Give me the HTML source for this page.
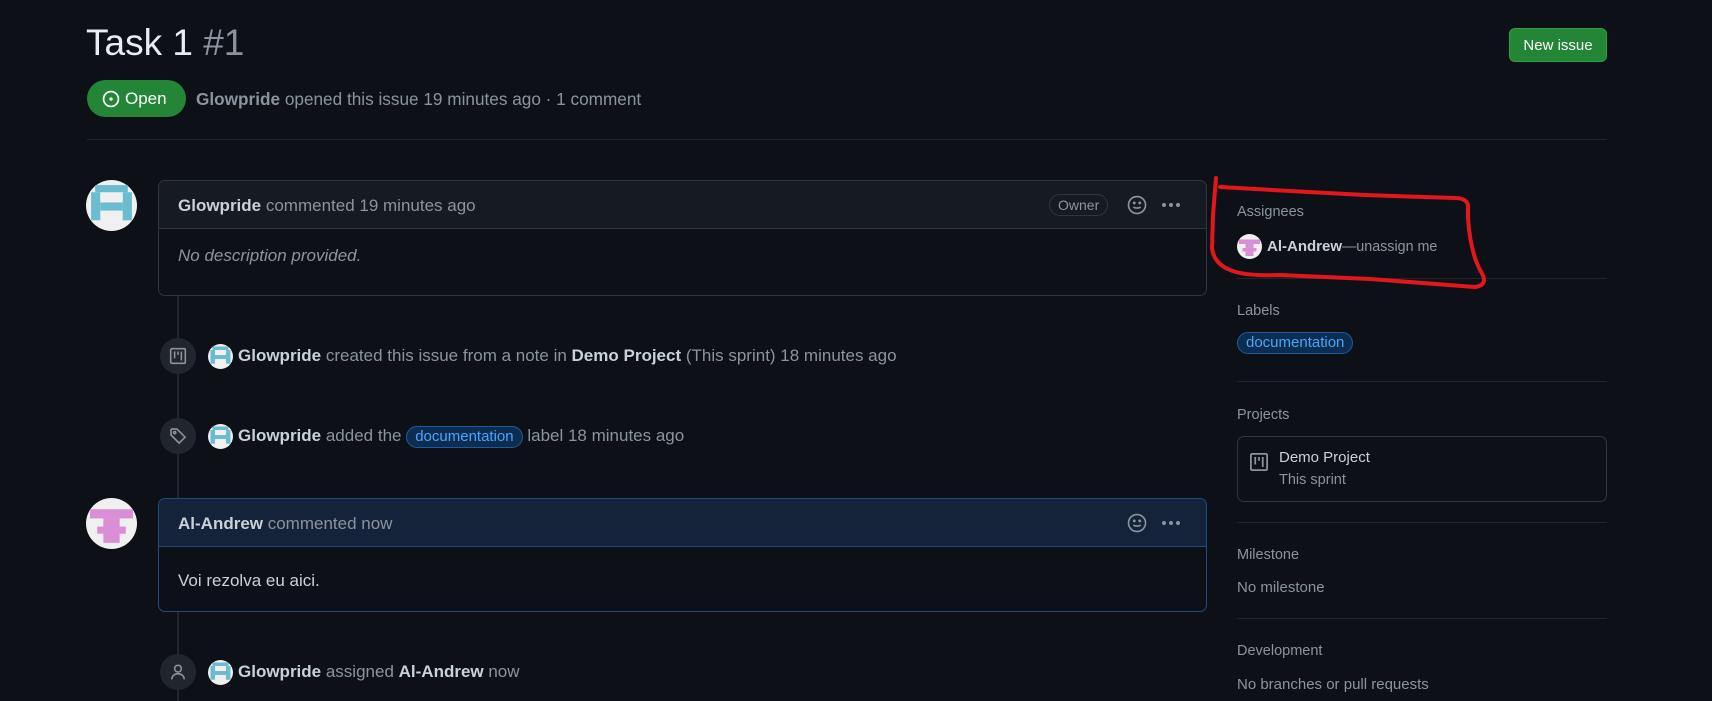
<!DOCTYPE html>
<html><head><meta charset="utf-8"><style>
*{box-sizing:border-box;margin:0;padding:0}
body{width:1712px;height:701px;overflow:hidden;background:#0d1117;font-family:"Liberation Sans",Arial,sans-serif;color:#c9d1d9;font-size:17px;position:relative}
.a{position:absolute;white-space:nowrap}
.m{color:#8b949e}
b{color:#c9d1d9;font-weight:bold}
.hr{position:absolute;height:1px;background:#21262d}
.lbl{display:inline-block;border:1px solid #1f5aa0;background:#0c2d4f;color:#4aa3ff;border-radius:12px;padding:1px 8px;font-size:15px;line-height:18px}
.box{position:absolute;border:1px solid #30363d;border-radius:7px;overflow:hidden;background:#0d1117}
.hd{position:absolute;left:0;right:0;top:0;background:#161b22;border-bottom:1px solid #30363d}
.ev{position:absolute;left:160px;width:36px;height:36px;border-radius:50%;background:#21262d;display:flex;align-items:center;justify-content:center}
.line{position:absolute;left:177px;width:2px;background:#21262d}
.sh{font-size:14.5px;color:#8b949e}
.dots{position:absolute;left:1003px;top:22px;display:flex;gap:3px}
.dots i{width:4px;height:4px;border-radius:50%;background:#8b949e}
</style></head><body>
<svg width="0" height="0" style="position:absolute"><defs>
<g id="gp"><circle cx="50" cy="50" r="50" fill="#f0f0f0"/><rect x="18" y="10" width="64" height="14" fill="#6bbcd1"/><rect x="10" y="24" width="18" height="55" fill="#6bbcd1"/><rect x="72" y="24" width="18" height="55" fill="#6bbcd1"/><rect x="28" y="44" width="44" height="16" fill="#6bbcd1"/><rect x="28" y="30" width="44" height="8" fill="#f0f0f0"/></g>
<g id="aa"><circle cx="50" cy="50" r="50" fill="#f0f0f0"/><rect x="8" y="22" width="84" height="18" fill="#d98ed6"/><rect x="34" y="40" width="32" height="48" fill="#d98ed6"/><rect x="22" y="56" width="56" height="14" fill="#d98ed6"/></g>
</defs></svg>

<div class="a" style="left:86px;top:22px;font-size:37px;color:#e6edf3">Task 1 <span style="color:#8b949e">#1</span></div>
<div class="a" style="left:1509px;top:28px;width:98px;height:34px;background:#238636;border:1px solid #2ea043;border-radius:6px;color:#fff;font-size:15px;display:flex;align-items:center;justify-content:center">New issue</div>
<div class="a" style="left:87px;top:80px;width:99px;height:37px;background:#238636;border-radius:19px;color:#fff;display:flex;align-items:center;padding-left:15px;font-size:17px">
<svg width="18" height="18" viewBox="0 0 16 16" style="margin-right:5px"><circle cx="8" cy="8" r="6.6" fill="none" stroke="#fff" stroke-width="1.5"/><circle cx="8" cy="8" r="1.5" fill="#fff"/></svg>Open</div>
<div class="a m" style="left:196px;top:89px;font-size:17.2px"><b style="color:#8b949e">Glowpride</b> opened this issue 19 minutes ago · 1 comment</div>
<div class="hr" style="left:87px;top:139px;width:1520px"></div>

<div class="line" style="top:296px;height:405px"></div>

<svg class="a" style="left:86px;top:180px" width="51" height="51" viewBox="0 0 100 100"><use href="#gp"/></svg>
<div class="box" style="left:158px;top:180px;width:1049px;height:116px">
<div class="hd" style="height:48px"></div>
<div class="a" style="left:19px;top:15px;color:#8b949e"><b>Glowpride</b> commented 19 minutes ago</div>
<div class="a" style="left:890px;top:13px;border:1px solid #30363d;border-radius:12px;padding:2px 8px;font-size:14px;color:#8b949e">Owner</div>
<svg class="a" style="left:968px;top:14px" width="20" height="20" viewBox="0 0 16 16" fill="none" stroke="#8b949e" stroke-width="1.3"><circle cx="8" cy="8" r="6.8"/><path d="M5.2 9.5c.8 1.2 4.8 1.2 5.6 0"/><circle cx="5.8" cy="6.3" r=".5" fill="#8b949e"/><circle cx="10.2" cy="6.3" r=".5" fill="#8b949e"/></svg>
<div class="dots"><i></i><i></i><i></i></div>
<div class="a" style="left:19px;top:65px;font-style:italic;color:#8b949e">No description provided.</div>
</div>

<div class="ev" style="top:338px"><svg width="18" height="18" viewBox="0 0 16 16" fill="none" stroke="#8b949e" stroke-width="1.4"><rect x="1.5" y="1.5" width="13" height="13" rx="1"/><path d="M5 4v6M8 4v3M11 4v8"/></svg></div>
<svg class="a" style="left:208px;top:344px" width="25" height="25" viewBox="0 0 100 100"><use href="#gp"/></svg>
<div class="a m" style="left:238px;top:346px"><b>Glowpride</b> created this issue from a note in <b>Demo Project</b> (This sprint) 18 minutes ago</div>

<div class="ev" style="top:418px"><svg width="18" height="18" viewBox="0 0 16 16" fill="none" stroke="#8b949e" stroke-width="1.4"><path d="M1.8 2.5v4.6l7.2 7.2 5.3-5.3-7.2-7.2H2.5z"/><circle cx="5" cy="5" r="1"/></svg></div>
<svg class="a" style="left:208px;top:424px" width="25" height="25" viewBox="0 0 100 100"><use href="#gp"/></svg>
<div class="a m" style="left:238px;top:426px"><b>Glowpride</b> added the <span class="lbl">documentation</span> label 18 minutes ago</div>

<svg class="a" style="left:86px;top:498px" width="51" height="51" viewBox="0 0 100 100"><use href="#aa"/></svg>
<div class="box" style="left:158px;top:498px;width:1049px;height:114px;border-color:#1f4b80">
<div class="hd" style="height:48px;background:#14233a;border-color:#1f4b80"></div>
<div class="a" style="left:19px;top:15px;color:#8b949e"><b>Al-Andrew</b> commented now</div>
<svg class="a" style="left:968px;top:14px" width="20" height="20" viewBox="0 0 16 16" fill="none" stroke="#8b949e" stroke-width="1.3"><circle cx="8" cy="8" r="6.8"/><path d="M5.2 9.5c.8 1.2 4.8 1.2 5.6 0"/><circle cx="5.8" cy="6.3" r=".5" fill="#8b949e"/><circle cx="10.2" cy="6.3" r=".5" fill="#8b949e"/></svg>
<div class="dots"><i></i><i></i><i></i></div>
<div class="a" style="left:19px;top:72px;color:#c9d1d9">Voi rezolva eu aici.</div>
</div>

<div class="ev" style="top:654px"><svg width="18" height="18" viewBox="0 0 16 16" fill="none" stroke="#8b949e" stroke-width="1.4"><circle cx="8" cy="5" r="3"/><path d="M2.5 14.5c0-3 2.5-5 5.5-5s5.5 2 5.5 5"/></svg></div>
<svg class="a" style="left:208px;top:660px" width="25" height="25" viewBox="0 0 100 100"><use href="#gp"/></svg>
<div class="a m" style="left:238px;top:662px"><b>Glowpride</b> assigned <b>Al-Andrew</b> now</div>

<!-- sidebar -->
<div class="a sh" style="left:1237px;top:204px">Assignees</div>
<svg class="a" style="left:1237px;top:234px" width="25" height="25" viewBox="0 0 100 100"><use href="#aa"/></svg>
<div class="a" style="left:1267px;top:238px;font-size:15px"><b>Al-Andrew</b><span class="m" style="font-size:14.3px">—unassign me</span></div>
<div class="hr" style="left:1237px;top:278px;width:370px"></div>
<div class="a sh" style="left:1237px;top:303px">Labels</div>
<div class="a" style="left:1237px;top:332px"><span class="lbl">documentation</span></div>
<div class="hr" style="left:1237px;top:381px;width:370px"></div>
<div class="a sh" style="left:1237px;top:407px">Projects</div>
<div class="box" style="left:1237px;top:436px;width:370px;height:66px">
<svg class="a" style="left:11px;top:15px" width="20" height="20" viewBox="0 0 16 16" fill="none" stroke="#8b949e" stroke-width="1.4"><rect x="1.5" y="1.5" width="13" height="13" rx="1"/><path d="M5 4v6M8 4v3M11 4v8"/></svg>
<div class="a" style="left:41px;top:12px;font-size:15px;color:#c9d1d9">Demo Project</div>
<div class="a m" style="left:41px;top:35px;font-size:14.5px">This sprint</div>
</div>
<div class="hr" style="left:1237px;top:522px;width:370px"></div>
<div class="a sh" style="left:1237px;top:547px">Milestone</div>
<div class="a m" style="left:1237px;top:579px;font-size:15px">No milestone</div>
<div class="hr" style="left:1237px;top:618px;width:370px"></div>
<div class="a sh" style="left:1237px;top:643px">Development</div>
<div class="a m" style="left:1237px;top:676px;font-size:15px">No branches or pull requests</div>

<svg class="a" style="left:0;top:0" width="1712" height="701"><path d="M1216 178 L1213 215 L1212 248 Q1214 266 1236 272 Q1250 276 1280 275 L1370 279 L1475 287 Q1490 285 1480 270 Q1470 250 1468 218 L1468 205 Q1466 198 1455 198 L1365 195 L1290 191 L1220 187" fill="none" stroke="#e3161b" stroke-width="4" stroke-linecap="round" stroke-linejoin="round"/></svg>
</body></html>
